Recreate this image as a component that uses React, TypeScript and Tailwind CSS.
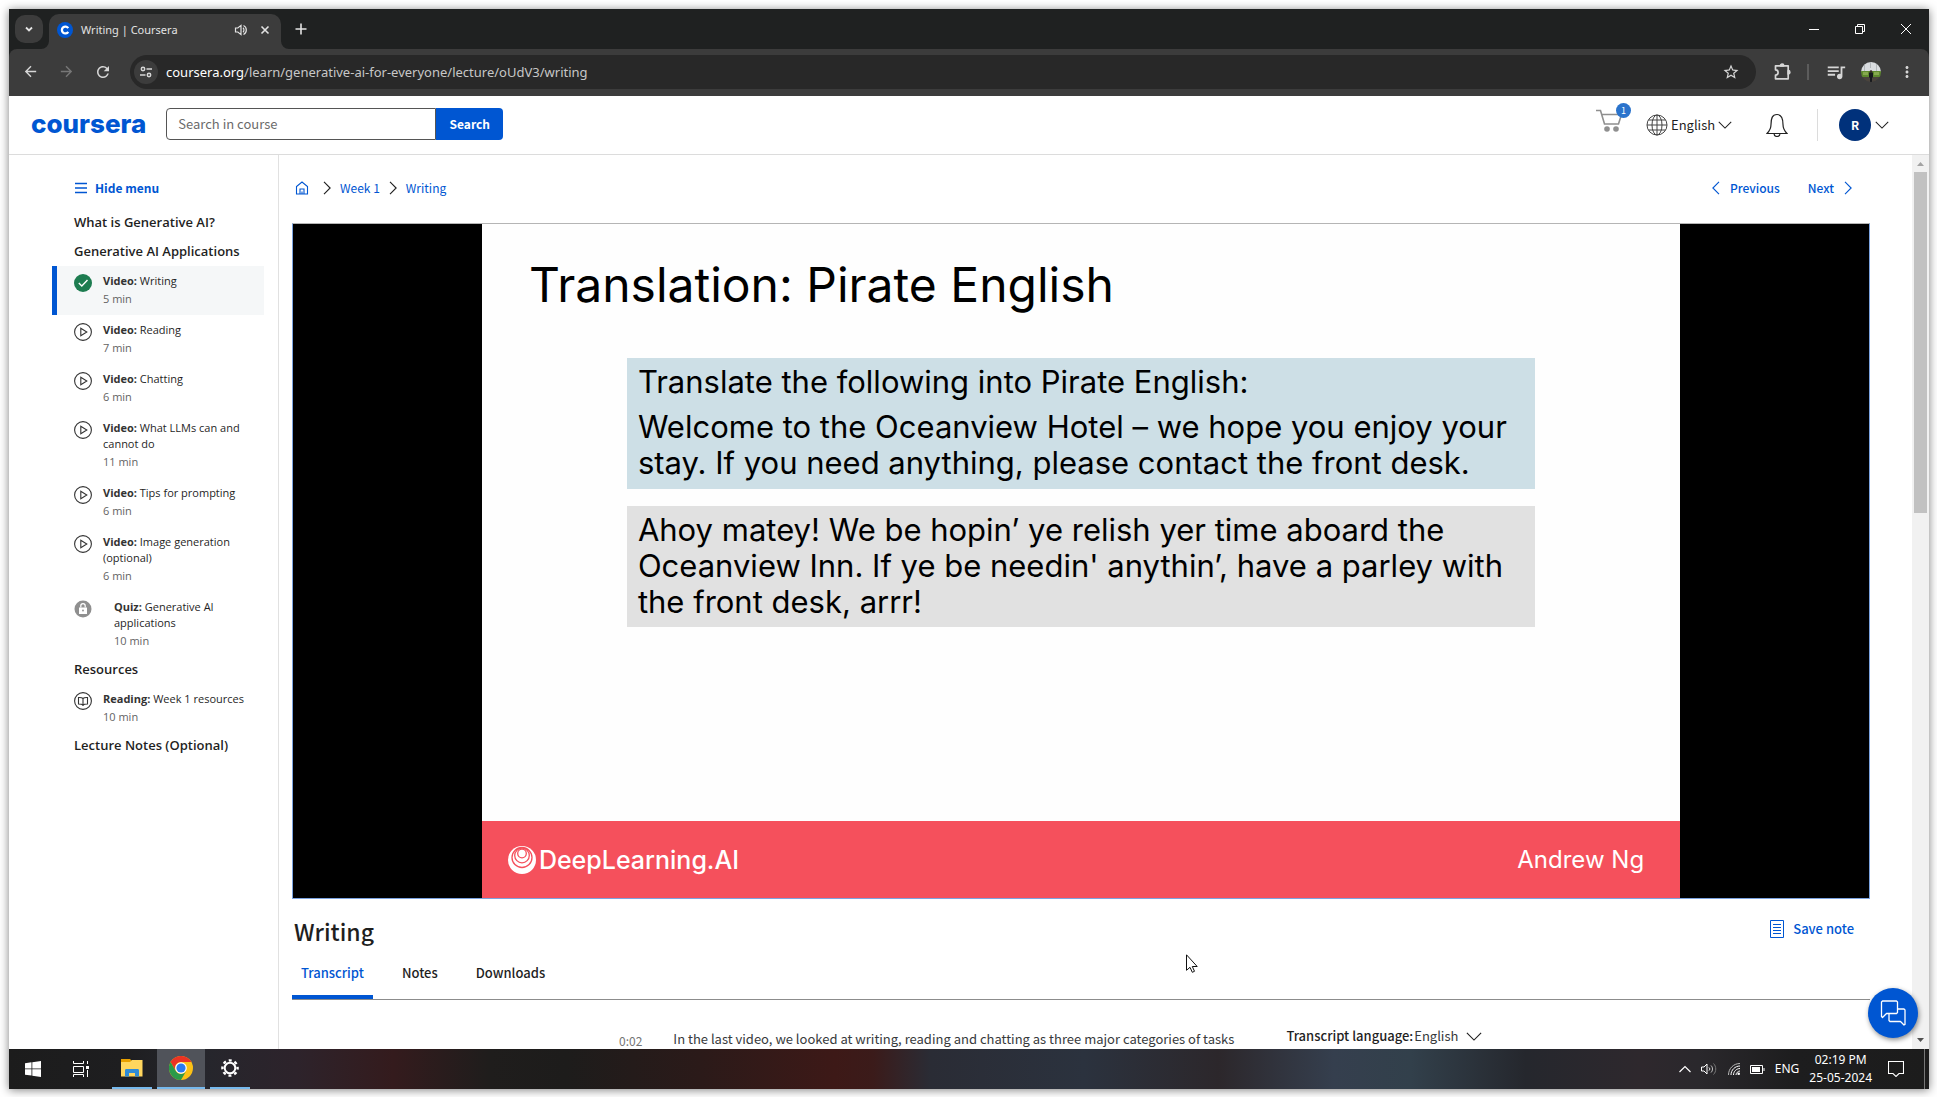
import type { ReactNode } from 'react';
import { MdArrowBack, MdArrowForward, MdMoreVert, MdQueueMusic, MdRefresh, MdStarBorder } from 'react-icons/md';

const source = "font-['Noto_Sans_CJK_SC',sans-serif]";

function Chevron({ className, d = 'M1 1l8 8 8-8', box = '0 0 18 10' }: { className: string; d?: string; box?: string }) {
  return (
    <svg viewBox={box} className={className} fill="none" stroke="currentColor" strokeWidth="1.3" aria-hidden="true">
      <path d={d} />
    </svg>
  );
}

function TitleBar() {
  return (
    <div className="flex h-10 shrink-0 items-end bg-[#1f2121] pl-1.5 text-[#e3e3e3]">
      <button aria-label="Search tabs" className="mb-1.5 flex size-7 items-center justify-center rounded-[10px] bg-[#3c3c3c]">
        <svg viewBox="0 0 10 10" className="size-2.5" fill="none" stroke="currentColor" strokeWidth="1.8"><path d="M2 3.5l3 3 3-3" /></svg>
      </button>
      <div className="relative ml-1.5 flex h-[35px] w-[232px] items-center rounded-t-[10px] bg-[#3c3c3c] px-2 pb-1">
        <svg viewBox="0 0 8 8" className="absolute bottom-0 -left-2 size-2" fill="#3c3c3c"><path d="M8 0v8H0a8 8 0 0 0 8-8z" /></svg>
        <svg viewBox="0 0 8 8" className="absolute -right-2 bottom-0 size-2" fill="#3c3c3c"><path d="M0 0v8h8a8 8 0 0 1-8-8z" /></svg>
        <svg viewBox="0 0 16 16" className="size-4">
          <circle cx="8" cy="8" r="8" fill="#0056d2" />
          <path d="M11.2 6.2A3.4 3.4 0 1 0 11.2 9.8" fill="none" stroke="#fff" strokeWidth="2.3" />
        </svg>
        <span className="ml-2 flex-1 font-['Noto_Sans',sans-serif] text-[11px] leading-4">Writing | Coursera</span>
        <button aria-label="Mute tab" className="mr-3">
          <svg viewBox="0 0 14 14" className="size-3.5" fill="none" stroke="currentColor" strokeWidth="1.2">
            <path d="M1.5 5v4h2.3L7 11.6V2.4L3.8 5z" />
            <path d="M9 4.8a3 3 0 0 1 0 4.4M9.5 2.5a5 5 0 0 1 0 9" />
          </svg>
        </button>
        <button aria-label="Close tab" className="mr-[3px]">
          <svg viewBox="0 0 10 10" className="size-2.5" stroke="currentColor" strokeWidth="1.6"><path d="M1.5 1.5l7 7M8.5 1.5l-7 7" /></svg>
        </button>
      </div>
      <button aria-label="New tab" className="mb-3.5 ml-3.5">
        <svg viewBox="0 0 12 12" className="size-3" stroke="currentColor" strokeWidth="1.6"><path d="M6 .5v11M.5 6h11" /></svg>
      </button>
      <div className="ml-auto flex h-full items-center text-white">
        <button aria-label="Minimize" className="flex h-full w-[46px] items-center justify-center">
          <svg viewBox="0 0 10 10" className="size-2.5" stroke="currentColor"><path d="M0 5.5h10" /></svg>
        </button>
        <button aria-label="Restore" className="flex h-full w-[46px] items-center justify-center">
          <svg viewBox="0 0 10 10" className="size-2.5" fill="none" stroke="currentColor"><path d="M.5 2.5h7v7h-7zM2.5 2.5v-2h7v7h-2" /></svg>
        </button>
        <button aria-label="Close" className="flex h-full w-[46px] items-center justify-center">
          <svg viewBox="0 0 10 10" className="size-2.5" stroke="currentColor"><path d="M0 0l10 10M10 0L0 10" /></svg>
        </button>
      </div>
    </div>
  );
}

function Toolbar() {
  return (
    <div className="bg-[#1f2121]">
      <div className="flex h-[47px] items-center rounded-t-lg bg-[#3c3c3c] pb-0.5 pl-[13px] text-[#d6d6d6]">
        <button aria-label="Back"><MdArrowBack className="size-[17px]" /></button>
        <button aria-label="Forward" className="ml-[19px] text-[#777]"><MdArrowForward className="size-[17px]" /></button>
        <button aria-label="Reload" className="ml-[19px]"><MdRefresh className="size-[18px]" /></button>
        <div className="ml-[18px] flex h-[34px] flex-1 items-center rounded-full bg-[#282828] pr-4 pl-1">
          <button aria-label="Site information" className="flex size-6 items-center justify-center rounded-full bg-[#3c3c3c]">
            <svg viewBox="0 0 12 12" className="size-3" fill="none" stroke="currentColor" strokeWidth="1.5">
              <circle cx="3" cy="3" r="1.7" /><path d="M6.5 3H12M0 9h5.5" /><circle cx="9" cy="9" r="1.7" />
            </svg>
          </button>
          <div role="textbox" aria-label="Address" className="ml-2 flex-1 font-['Noto_Sans',sans-serif] text-[13px] leading-5 text-[#c7c7c7]">
            <span className="text-white">coursera.org</span>/learn/generative-ai-for-everyone/lecture/oUdV3/writing
          </div>
          <button aria-label="Bookmark this tab"><MdStarBorder className="size-[18px]" /></button>
        </div>
        <button aria-label="Extensions" className="ml-[17px]">
          <svg viewBox="0 0 20 20" className="size-5" fill="none" stroke="currentColor" strokeWidth="1.7" strokeLinejoin="round">
            <path d="M2.500 3.800H15.200V16.800H2.500V13a2.600 2.600 0 0 0 0-5.200z" />
            <path d="M7.500 3.800a1.600 1.600 0 0 1 3.200 0zM15.200 8.700a1.600 1.600 0 0 1 0 3.200z" fill="currentColor" />
          </svg>
        </button>
        <div className="mx-3.5 h-4 w-0.5 bg-[#5c5c5c]" />
        <button aria-label="Media controls" className="ml-0.5"><MdQueueMusic className="size-[22px]" /></button>
        <button aria-label="Profile" className="ml-3.5">
          <svg viewBox="0 0 20 20" className="size-5">
            <defs><clipPath id="face"><circle cx="10" cy="10" r="10" /></clipPath></defs>
            <g clipPath="url(#face)">
              <path fill="#d9dcdf" d="M0 0h20v10H0z" />
              <path fill="#b2b7ba" d="M3 0h1v9H3zM9 0h1v6H9zM15 0h1v9h-1z" />
              <path fill="#5f8a2e" d="M0 9h20v6H0z" /><path fill="#86a94e" d="M2 10h5v3H2zM13 10h5v3h-5z" />
              <path fill="#4a443d" d="M0 15h20v5H0z" />
              <circle cx="10" cy="9.500" r="1.300" fill="#3a2c25" /><path fill="#17191d" d="M8 10.500h4v5h-1v5H9v-5H8z" />
            </g>
          </svg>
        </button>
        <button aria-label="Browser menu" className="mr-[13px] ml-[17px]"><MdMoreVert className="size-[18px]" /></button>
      </div>
    </div>
  );
}

function SiteHeader() {
  return (
    <header className="flex h-[59px] shrink-0 items-center border-b border-[#dcdcdc] bg-white pr-10 pl-[22px]">
      <a href="#home" className="mb-0.5 font-['Inter',sans-serif] text-[26px] leading-8 font-extrabold text-[#0056d2]">coursera</a>
      <form className="mb-[3px] ml-5 flex h-8">
        <input type="text" aria-label="Search in course" placeholder="Search in course" className={`${source} w-[270px] rounded-l border border-[#555] px-[11px] text-[13px] leading-5 placeholder:text-[#6b6b6b]`} />
        <button type="button" className={`${source} w-[67px] rounded-r bg-[#0056d2] text-[12px] font-bold text-white`}>Search</button>
      </form>
      <button aria-label="Cart, 1 item" className="relative ml-auto mb-2">
        <svg viewBox="0 0 26 24" className="h-6 w-[26px]" fill="none" stroke="#8f8f8f" strokeWidth="1.6">
          <path d="M0 1.500h4.500l4 13.500h14l3-9.500H6" /><circle cx="11" cy="20" r="2.800" fill="#8f8f8f" stroke="none" /><circle cx="20" cy="20" r="2.800" fill="#8f8f8f" stroke="none" />
        </svg>
        <span className={`${source} absolute -top-1.5 -right-[9px] flex size-[15px] items-center justify-center rounded-full bg-[#2a73cc] text-[9px] leading-none text-white`}>1</span>
      </button>
      <svg viewBox="0 0 22 22" className="ml-6 size-[22px]" fill="none" stroke="#444" strokeWidth="1" aria-hidden="true">
        <circle cx="11" cy="11" r="10" /><ellipse cx="11" cy="11" rx="5" ry="10" /><path d="M11 1v20M1 11h20M2.500 6h17M2.500 16h17" />
      </svg>
      <div className="relative ml-[3px] flex items-center">
        <select aria-label="Language" className={`${source} w-[62px] appearance-none text-[13px] leading-5 text-[#1f1f1f]`}><option>English</option></select>
        <Chevron className="pointer-events-none absolute right-px h-2 w-3.5 text-[#1f1f1f]" />
      </div>
      <button aria-label="Notifications" className="ml-[33px]">
        <svg viewBox="0 0 22 24" className="h-6 w-[22px]" fill="none" stroke="#222" strokeWidth="1.2">
          <path d="M1 20.500c3-3 4-5 4-9 0-6 1-10 6-10s6 4 6 10c0 4 1 6 4 9zM8 20.500c0 4 6 4 6 0" />
        </svg>
      </button>
      <div className="ml-[29px] h-8 w-px bg-[#dcdcdc]" />
      <button aria-label="Account" className="ml-[21px] flex items-center">
        <span className={`${source} flex size-8 items-center justify-center rounded-full bg-[#00317b] text-[12px] font-bold text-white`}>R</span>
        <Chevron className="ml-1 h-2 w-3.5 text-[#1f1f1f]" />
      </button>
    </header>
  );
}

function PlayIcon() {
  return (
    <svg viewBox="0 0 18 18" className="size-[18px]" fill="none" stroke="#333" strokeWidth="1.1"><circle cx="9" cy="9" r="8.4" /><path d="M6.8 5.200v7.600l6-3.800z" /></svg>
  );
}
function CheckIcon() {
  return (
    <svg viewBox="0 0 18 18" className="size-[18px]"><circle cx="9" cy="9" r="9" fill="#1d7c50" /><path d="M4.800 9l3 3L13.500 6" fill="none" stroke="#fff" strokeWidth="1.4" /></svg>
  );
}
function LockIcon() {
  return (
    <svg viewBox="0 0 18 18" className="size-[18px]"><circle cx="9" cy="9" r="8.500" fill="#8f8f8f" /><path d="M5 7.500h8V14H5z" fill="#fff" /><path d="M6.800 7.500V5.800c0-2.900 4.400-2.900 4.400 0v1.700" fill="none" stroke="#fff" strokeWidth="1.2" /><circle cx="9" cy="10.500" r=".9" fill="#8f8f8f" /></svg>
  );
}
function BookIcon() {
  return (
    <svg viewBox="0 0 18 18" className="size-[18px]" fill="none" stroke="#333" strokeWidth="1.1"><circle cx="9" cy="9" r="8.4" /><path d="M9 6.500C8 5.500 6 5.400 4.500 5.500V12C6 12 8 12 9 13c1-1 3-1 4.500-1V5.500C12 5.400 10 5.500 9 6.500zM9 6.500v7.500" /></svg>
  );
}

function Lesson({ kind, name, time, icon, active = false, wide = false }: { kind: string; name: string; time: string; icon: ReactNode; active?: boolean; wide?: boolean }) {
  return (
    <li>
      <a href="#lesson" className={`flex border-l-[5px] pt-[7px] pr-4 pb-2 pl-[17px] text-[11px] leading-4 ${active ? 'border-[#0056d2] bg-[#f5f7f8]' : 'border-transparent'}`}>
        <span className="mt-px shrink-0">{icon}</span>
        <span className={wide ? 'ml-[22px]' : 'ml-[11px]'}>
          <span className="block text-[#1f1f1f]"><b className="font-bold text-[#333]">{kind}:</b> {name}</span>
          <span className="mt-0.5 block text-[#636363]">{time}</span>
        </span>
      </a>
    </li>
  );
}

function Heading({ children }: { children: ReactNode }) {
  return <h2 className="px-[22px] text-[13px] leading-[29px] font-semibold text-[#1f1f1f]">{children}</h2>;
}

function Sidebar() {
  return (
    <nav className="w-[270px] shrink-0 border-r border-[#e1e1e1] pr-3.5 pl-[43px] font-['Open_Sans',sans-serif]">
      <button className={`${source} mt-[23px] mb-2.5 ml-[23px] flex items-center text-[12px] leading-5 font-bold text-[#0056d2]`}>
        <svg viewBox="0 0 12 12" className="mr-2 size-3" stroke="currentColor" strokeWidth="1.4"><path d="M0 1.500h12M0 6h12M0 10.500h12" /></svg>
        Hide menu
      </button>
      <Heading>What is Generative AI?</Heading>
      <Heading>Generative AI Applications</Heading>
      <ul className="-mb-0.5">
        <Lesson active kind="Video" name="Writing" time="5 min" icon={<CheckIcon />} />
        <Lesson kind="Video" name="Reading" time="7 min" icon={<PlayIcon />} />
        <Lesson kind="Video" name="Chatting" time="6 min" icon={<PlayIcon />} />
        <Lesson kind="Video" name="What LLMs can and cannot do" time="11 min" icon={<PlayIcon />} />
        <Lesson kind="Video" name="Tips for prompting" time="6 min" icon={<PlayIcon />} />
        <Lesson kind="Video" name="Image generation (optional)" time="6 min" icon={<PlayIcon />} />
        <Lesson wide kind="Quiz" name="Generative AI applications" time="10 min" icon={<LockIcon />} />
      </ul>
      <Heading>Resources</Heading>
      <ul className="-mb-0.5"><Lesson kind="Reading" name="Week 1 resources" time="10 min" icon={<BookIcon />} /></ul>
      <Heading>Lecture Notes (Optional)</Heading>
    </nav>
  );
}

function Crumbs() {
  const sep = 'M1 1l7 7-7 7';
  return (
    <div className={`${source} flex h-[68px] shrink-0 items-center pb-0.5 text-[12px] leading-5 text-[#0056d2]`}>
      <a href="#home" aria-label="Home" className="ml-[3px]">
        <svg viewBox="0 0 14 14" className="size-3.5" fill="none" stroke="currentColor" strokeWidth="1.1"><path d="M1.500 5.500v7.500h11V5.500L7 1zM5 13V8h4v5M7 10.500V13" /></svg>
      </a>
      <Chevron box="0 0 10 16" d={sep} className="ml-3.5 h-3.5 w-[9px] text-[#1f1f1f]" />
      <a href="#week" className="ml-2">Week 1</a>
      <Chevron box="0 0 10 16" d={sep} className="ml-[9px] h-3.5 w-[9px] text-[#1f1f1f]" />
      <a href="#writing" className="ml-2">Writing</a>
      <a href="#previous" className="ml-auto flex items-center font-medium"><Chevron box="0 0 10 16" d="M9 1L2 8l7 7" className="mr-2.5 h-3.5 w-[9px]" />Previous</a>
      <a href="#next" className="mr-[17px] ml-7 flex items-center font-medium">Next<Chevron box="0 0 10 16" d={sep} className="ml-2.5 h-3.5 w-[9px]" /></a>
    </div>
  );
}

function Video() {
  return (
    <section aria-label="Lecture video" className="flex h-[676px] shrink-0 justify-center border border-[#7ba3e0] border-t-[#b5b5b5] bg-black font-['Inter',sans-serif] text-black">
      <div className="flex aspect-video h-full flex-col bg-[#fefefe]">
        <h1 className="mt-[31px] ml-[47px] text-[48px] leading-[60px]">Translation: Pirate English</h1>
        <div className="mx-[145px] mt-[43px] bg-[#cddfe6] pt-1.5 pb-2 pl-[11px] text-[31px] leading-9">
          <p className="mb-[9px]">Translate the following into Pirate English:</p>
          <p>Welcome to the Oceanview Hotel – we hope you enjoy your<br />stay. If you need anything, please contact the front desk.</p>
        </div>
        <p className="mx-[145px] mt-[17px] bg-[#e1e1e1] pt-1.5 pb-[7px] pl-[11px] text-[31px] leading-9">
          Ahoy matey! We be hopin’ ye relish yer time aboard the<br />Oceanview Inn. If ye be needin' anythin’, have a parley with<br />the front desk, arrr!
        </p>
        <div className="mt-auto flex h-[77px] items-center bg-[#f5505c] pr-9 pl-[26px] text-white">
          <svg viewBox="0 0 28 28" className="size-7">
            <circle cx="14" cy="14" r="14" fill="#fff" />
            <g fill="none" stroke="#f5505c" strokeWidth="1.3"><circle cx="14" cy="11.500" r="10" /><circle cx="14" cy="9.500" r="7.300" /><circle cx="14" cy="7.500" r="4.300" /></g>
          </svg>
          <span className="ml-[3px] text-[25px] leading-8 font-medium">DeepLearning.AI</span>
          <span className="ml-auto text-[24px] leading-8">Andrew Ng</span>
        </div>
      </div>
    </section>
  );
}

function Details() {
  const tab = 'px-[9px] pb-3 border-b-4';
  return (
    <div className={`${source} shrink-0`}>
      <div className="flex h-16 items-center justify-between">
        <h2 className="pl-0.5 text-[23px] leading-8 font-medium text-[#1f1f1f]">Writing</h2>
        <button className="mr-4 mb-1 flex items-center text-[13px] leading-5 font-medium text-[#0056d2]">
          <svg viewBox="0 0 14 18" className="mr-[9px] h-[18px] w-3.5" fill="none" stroke="currentColor" strokeWidth="1"><path d="M.5.5h13v17H.5zM3 4.500h8M3 7.500h8M3 10.500h8M3 13.500h8" /></svg>
          Save note
        </button>
      </div>
      <div role="tablist" className="flex gap-5 border-b border-[#8c8c8c] text-[13px] leading-5 font-medium text-[#1f1f1f]">
        <button role="tab" aria-selected="true" className={`${tab} border-[#0056d2] text-[#0056d2]`}>Transcript</button>
        <button role="tab" aria-selected="false" className={`${tab} border-transparent`}>Notes</button>
        <button role="tab" aria-selected="false" className={`${tab} border-transparent`}>Downloads</button>
      </div>
      <div className="flex items-start pt-[25px] pl-[327px] text-[13px] leading-[22px] whitespace-nowrap text-[#373a3c]">
        <button className="mt-[5px] mr-[31px] text-[12px] text-[#757575]">0:02</button>
        <p className="mt-[3px]">In the last video, we looked at writing, reading and chatting as three major categories of tasks</p>
        <div className="relative ml-[52px] flex items-center">
          <label htmlFor="transcript-language" className="font-medium text-[#1f1f1f]">Transcript language:</label>
          <select id="transcript-language" className="ml-px w-[68px] appearance-none"><option>English</option></select>
          <Chevron className="pointer-events-none absolute right-0 h-[9px] w-4 text-[#1f1f1f]" />
        </div>
      </div>
    </div>
  );
}

function Scrollbar() {
  return (
    <div aria-hidden="true" className="flex w-[17px] shrink-0 flex-col items-center bg-[#f1f1f1]">
      <svg viewBox="0 0 17 17" className="size-[17px]" fill="#a3a3a3"><path d="M5 11h7L8.500 7z" /></svg>
      <div className="h-[341px] w-[13px] bg-[#c1c1c1]" />
      <svg viewBox="0 0 17 17" className="mt-auto size-[17px]" fill="#505050"><path d="M5 6h7l-3.500 4z" /></svg>
    </div>
  );
}

function Taskbar() {
  return (
    <footer className="flex h-10 shrink-0 items-center bg-[linear-gradient(90deg,#1c1c1c_0%,#1e1e20_6%,#25262c_10%,#2d232b_15%,#341b1d_20%,#1f1d1c_25%,#1d1c1b_29%,#2b1a19_36%,#3d1917_43%,#3b1b1a_45%,#2a2c35_48%,#2b323e_56%,#2c272b_63%,#353f4e_69%,#32404b_73%,#25272d_79%,#2e282d_85%,#2a282c_88%,#1d1d1e_93%,#1c1c1c_100%)] font-['Noto_Sans',sans-serif] text-white">
      <button aria-label="Start" className="flex h-full w-12 items-center justify-center">
        <svg viewBox="0 0 16 16" className="size-4" fill="#fff"><path d="M0 2.200l6.500-.9v6.200H0zM7.300 1.200L16 0v7.500H7.300zM0 8.300h6.500v6.300L0 13.700zM7.300 8.300H16V16l-8.700-1.200z" /></svg>
      </button>
      <button aria-label="Task view" className="flex h-full w-12 items-center justify-center">
        <svg viewBox="0 0 16 16" className="size-4" fill="none" stroke="#fff"><path d="M.5 0v2.500h10V0M.5 5.500h10v6H.5zM.5 16v-2.500h10V16M14.500 0v3M14.500 9v7" /><path d="M13 5h3v3h-3z" fill="#fff" stroke="none" /></svg>
      </button>
      <button aria-label="File Explorer" className="ml-[7px] flex h-full w-10 items-center justify-center border-b-2 border-[#76b9ed]">
        <svg viewBox="0 0 22 18" className="h-[18px] w-[22px]"><path fill="#e8a000" d="M0 0h9l2 2v4H0z" /><path fill="#ffd65e" d="M0 3h9l2-2h10.500v16.500H0z" /><path fill="#2f8bd6" d="M4 17.500v-6c0-1 .5-1.500 1.500-1.500h11c1 0 1.500.5 1.500 1.500v6h-4V14H8v3.500z" /></svg>
      </button>
      <button aria-label="Chrome" className="ml-[5px] flex h-full w-12 items-center justify-center border-b-2 border-[#76b9ed] bg-[#50535a]">
        <svg viewBox="0 0 24 24" className="size-6">
          <circle cx="12" cy="12" r="12" fill="#fbc116" />
          <path fill="#ea3323" d="M1.600 6A12 12 0 0 1 22.400 6H12a6 6 0 0 0-5.200 9z" />
          <path fill="#2a9a48" d="M1.600 6A12 12 0 0 0 12 24l5.200-9A6 6 0 0 1 6.800 15z" />
          <circle cx="12" cy="12" r="5.800" fill="#fff" /><circle cx="12" cy="12" r="4.600" fill="#2a7af0" />
        </svg>
      </button>
      <button aria-label="Settings" className="ml-[5px] flex h-full w-10 items-center justify-center border-b-2 border-[#76b9ed]">
        <svg viewBox="0 0 18 18" className="size-[18px]" fill="none" stroke="#fff"><circle cx="9" cy="9" r="5.300" strokeWidth="2" /><circle cx="9" cy="9" r="7.600" strokeWidth="2.400" strokeDasharray="2.980 2.988" strokeDashoffset="1.490" /></svg>
      </button>
      <button aria-label="Show hidden icons" className="ml-auto">
        <svg viewBox="0 0 12 8" className="h-2 w-3" fill="none" stroke="#fff" strokeWidth="1.2"><path d="M.5 7L6 1.500 11.500 7" /></svg>
      </button>
      <button aria-label="Volume" className="ml-2.5">
        <svg viewBox="0 0 16 14" className="h-3.5 w-4" fill="none" stroke="#fff"><path d="M.5 5v4H3l3 3V2L3 5zM8 5.500c1 1 1 2 0 3" /><path d="M10 3.500c2 2 2 5 0 7" stroke="#ccc" /><path d="M12.500 1.500c3 3 3 8 0 11" stroke="#777" /></svg>
      </button>
      <button aria-label="Wi-Fi" className="ml-[11px]">
        <svg viewBox="0 0 12 12" className="size-3" fill="none" stroke="#fff"><path d="M.5 12C.5 5.500 5.500.5 12 .5" stroke="#bbb" /><path d="M3 12c0-5 4-9 9-9M5.500 12c0-3.500 3-6.500 6.500-6.500M8 12c0-2 2-4 4-4" /><circle cx="10.700" cy="10.700" r="1.300" fill="#fff" stroke="none" /></svg>
      </button>
      <button aria-label="Battery" className="ml-2.5">
        <svg viewBox="0 0 15 9" className="h-[9px] w-[15px]" fill="none" stroke="#fff"><path d="M.5.5h12v8H.5zM14 3v3" /><path d="M2 2h8v5H2z" fill="#fff" stroke="none" /></svg>
      </button>
      <button className="ml-2.5 text-[12px] leading-4">ENG</button>
      <button className="ml-2.5 text-center text-[12px] leading-[18px]">02:19 PM<br />25-05-2024</button>
      <button aria-label="Action center" className="ml-4">
        <svg viewBox="0 0 16 16" className="size-4" fill="none" stroke="#fff" strokeWidth="1.1"><path d="M.5.500h15v12h-4.500l-3 3-3-3H.5z" /></svg>
      </button>
      <div className="ml-5 h-full w-px bg-[#777]" /><div className="w-1" />
    </footer>
  );
}

export default function App() {
  return (
    <div className="h-screen overflow-hidden bg-white pt-[9px] pr-2 pb-2 pl-[9px]">
      <div className="relative flex h-full flex-col bg-white shadow-[0_1px_9px_rgba(0,0,0,0.5)]">
        <TitleBar />
        <Toolbar />
        <SiteHeader />
        <div className="relative flex min-h-0 flex-1">
          <Sidebar />
          <main className="flex min-w-0 flex-1 flex-col overflow-hidden pr-[42px] pl-[13px]">
            <Crumbs />
            <Video />
            <Details />
          </main>
          <Scrollbar />
          <button aria-label="Open chat" className="absolute right-[11px] bottom-[11px] flex size-[50px] items-center justify-center rounded-full bg-[#0056d2] shadow-[1px_2px_5px_rgba(0,0,0,0.45)]">
            <svg viewBox="0 0 26 26" className="size-[26px]" fill="none" stroke="#fff" strokeWidth="1.3" strokeLinejoin="round">
              <path d="M2.500 1h14l1 1v10.500l-1 1H6.500l-4 4-1-1V2z" /><path d="M17.500 9h6.500l1 1v14.500l-1 .5-3.500-3.500H10l-1-1v-7" />
            </svg>
          </button>
          <svg viewBox="0 0 12 19" className="pointer-events-none absolute bottom-[76px] left-[61.3%] h-[19px] w-3" fill="#fff" stroke="#111"><path d="M.5.800v15.500l3.500-3 2.300 5 2.200-1-2.200-4.800h4.900z" /></svg>
        </div>
        <Taskbar />
      </div>
    </div>
  );
}
